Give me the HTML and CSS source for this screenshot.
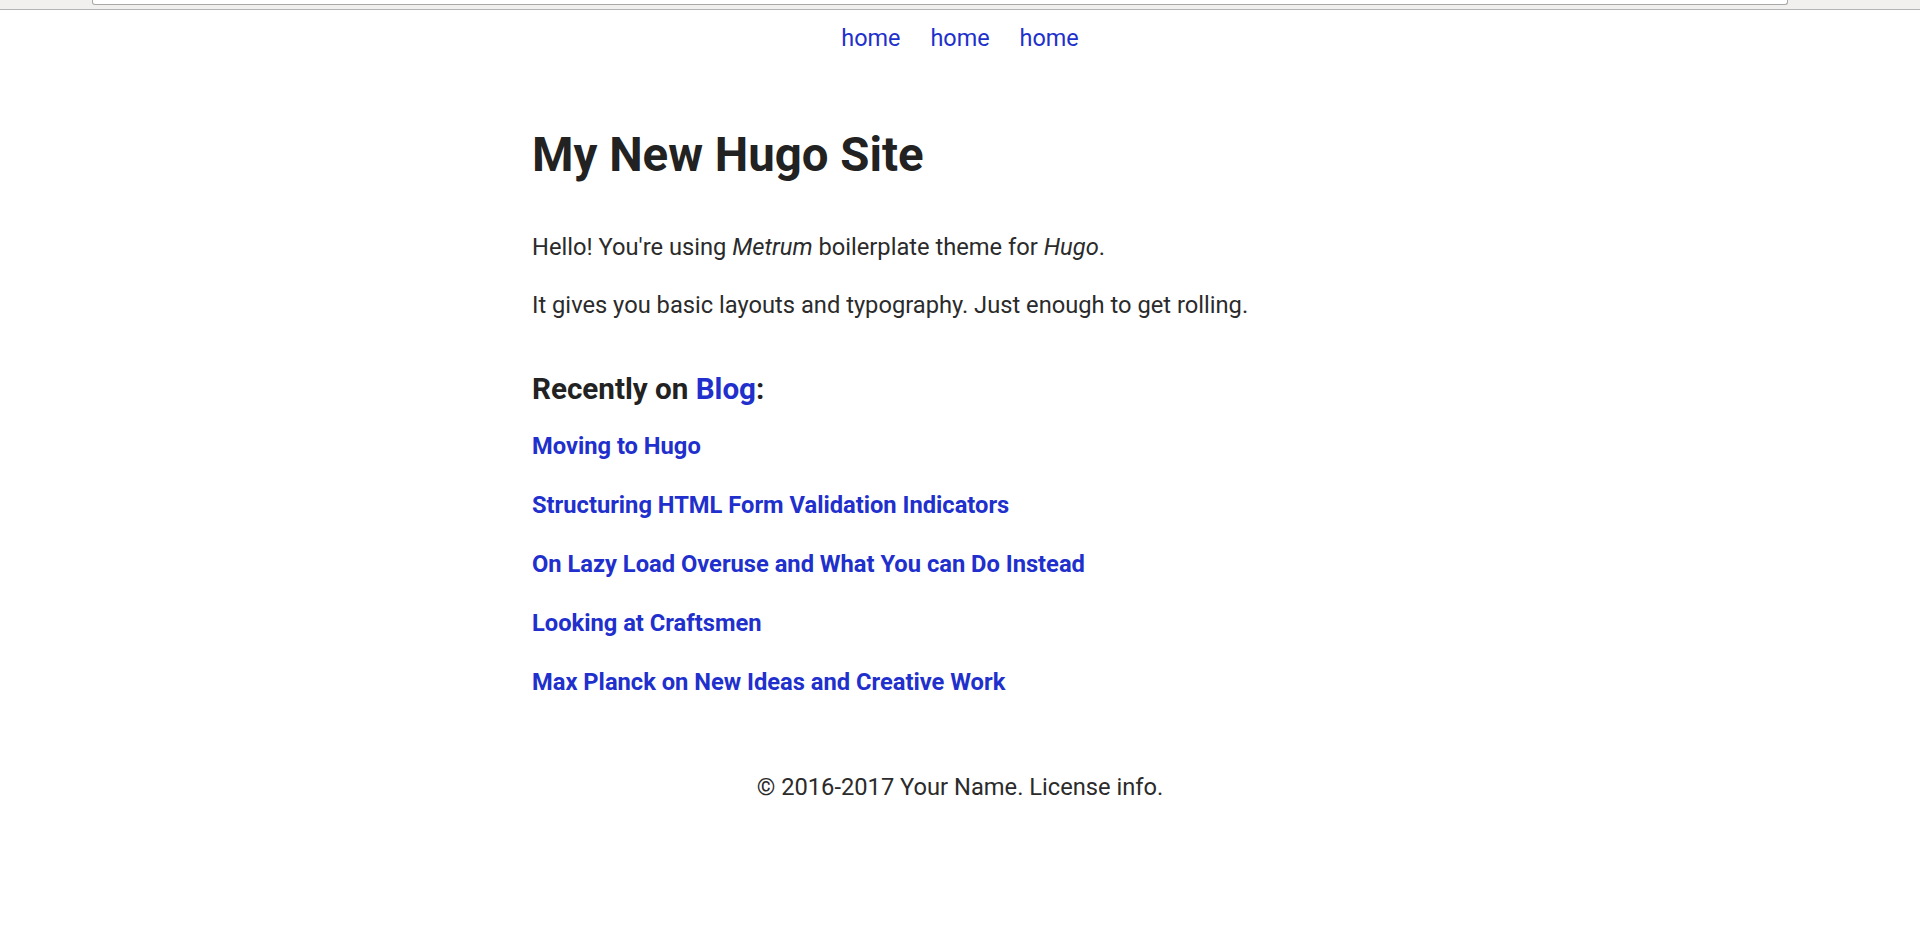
FILE: index.html
```html
<!DOCTYPE html>
<html lang="en">
<head>
<meta charset="utf-8">
<title>My New Hugo Site</title>
<link rel="stylesheet" href="styles.css">
</head>
<body>
<div class="chrome"><div class="urlbox"></div></div>
<nav class="nav">
  <a href="#">home</a>
  <a href="#">home</a>
  <a href="#">home</a>
</nav>
<main class="content">
  <h1 class="title">My New Hugo Site</h1>
  <p class="text">Hello! You're using <em>Metrum</em> boilerplate theme for <em>Hugo</em>.</p>
  <p class="text">It gives you basic layouts and typography. Just enough to get rolling.</p>
  <h2 class="recent">Recently on <a href="#">Blog</a>:</h2>
  <ul class="posts">
    <li><a href="#">Moving to Hugo</a></li>
    <li><a href="#">Structuring HTML Form Validation Indicators</a></li>
    <li><a href="#">On Lazy Load Overuse and What You can Do Instead</a></li>
    <li><a href="#">Looking at Craftsmen</a></li>
    <li><a href="#">Max Planck on New Ideas and Creative Work</a></li>
  </ul>
</main>
<footer class="footer">© 2016-2017 Your Name. License info.</footer>
</body>
</html>
```
FILE: styles.css
```css
html, body {
  margin: 0;
  padding: 0;
  background: #fff;
}
body {
  font-family: Roboto, "Liberation Sans", sans-serif;
  font-size: 23.7px;
  line-height: 1.5;
  color: #2b2b2b;
}
a {
  color: #2130cc;
  text-decoration: none;
}
.chrome {
  height: 9px;
  background: #f1f0ee;
  border-bottom: 1px solid #b4b4b4;
}
.urlbox {
  height: 4px;
  margin: 0 132px 0 92px;
  background: #fff;
  border: 1px solid #a8a8a8;
  border-top: none;
  border-radius: 0 0 3px 3px;
}
.nav {
  display: flex;
  justify-content: center;
  gap: 30px;
  padding-top: 11px;
  font-size: 23.4px;
}
.content {
  width: 856px;
  margin: 0 auto;
}
.title {
  margin: 71px 0 0;
  font-size: 47.4px;
  font-weight: 700;
  line-height: 1.2;
  color: #222;
}
.text {
  margin: 22.5px 0 0;
}
.title + .text {
  margin-top: 46px;
}
.recent {
  font-size: 29.6px;
  font-weight: 700;
  line-height: 1.2;
  margin: 48px 0 0;
  color: #222;
}
.posts {
  list-style: none;
  margin: 22px 0 0;
  padding: 0;
  display: flex;
  flex-direction: column;
  gap: 23.5px;
}
.posts a {
  font-weight: 700;
}
.footer {
  text-align: center;
  margin-top: 69px;
}
```
